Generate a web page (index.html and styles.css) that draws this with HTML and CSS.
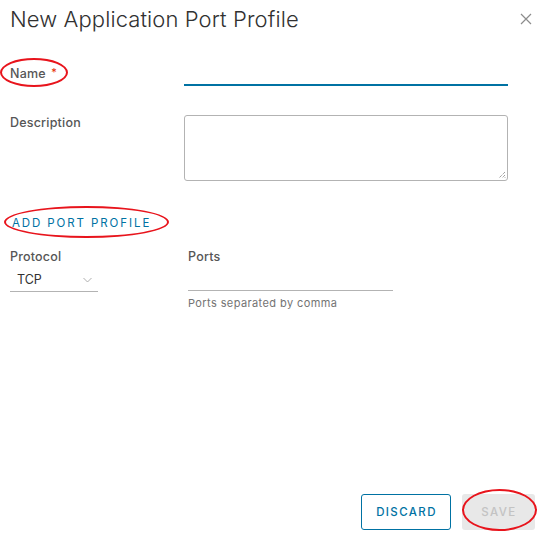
FILE: index.html
```html
<!DOCTYPE html>
<html>
<head>
<meta charset="utf-8">
<link rel="stylesheet" href="styles.css">
</head>
<body>
<div class="modal">
  <div class="header">
    <h1 class="title">New Application Port Profile</h1>
    <button class="close" aria-label="Close">
      <svg width="12" height="12" viewBox="0 0 12 12"><path d="M1 1L11 11M11 1L1 11" stroke="#8c8c8c" stroke-width="1.2" fill="none"/></svg>
    </button>
  </div>
  <div class="form">
    <div class="row row-name">
      <label class="label">Name <span class="req">*</span></label>
      <div class="control"><div class="input focused"></div></div>
    </div>
    <div class="row row-desc">
      <label class="label">Description</label>
      <div class="control"><div class="textarea"><svg class="grip" width="8" height="8" viewBox="0 0 8 8"><path d="M7 1L1 7M7 4L4 7M7 6.5L6.5 7" stroke="#555" stroke-width="0.8" stroke-dasharray="1 1"/></svg></div></div>
    </div>
    <div class="add-link">ADD PORT PROFILE</div>
    <div class="ports-row">
      <div class="col col-proto">
        <div class="label">Protocol</div>
        <div class="select"><span>TCP</span><svg width="9" height="6" viewBox="0 0 9 6"><path d="M0.5 1L4.5 5L8.5 1" stroke="#a6a6a6" stroke-width="0.9" fill="none"/></svg></div>
      </div>
      <div class="col col-ports">
        <div class="label">Ports</div>
        <div class="ports-input"></div>
        <div class="helper">Ports separated by comma</div>
      </div>
    </div>
  </div>
  <div class="footer">
    <button class="btn btn-outline">DISCARD</button>
    <button class="btn btn-disabled">SAVE</button>
  </div>
  <div class="mark mark-name"></div>
  <div class="mark mark-add"></div>
  <div class="mark mark-save"></div>
</div>
</body>
</html>
```
FILE: styles.css
```css
* { box-sizing: border-box; }
html, body { margin: 0; padding: 0; background: #fff; }
body { font-family: Inter, Lato, sans-serif; color: #565656; }
.modal { position: relative; width: 547px; height: 540px; display: flex; flex-direction: column; }
.header { display: flex; justify-content: space-between; align-items: flex-start; padding: 5px 15px 0 10px; }
.title { margin: 0; font-weight: 300; font-size: 22px; line-height: 28px; color: #313131; letter-spacing: 0.1px; }
.close { border: 0; background: none; padding: 0; margin-top: 8px; width: 12px; height: 12px; display: block; }
.close svg { display: block; }
.form { padding: 0 39px 0 10px; }
.row { display: flex; }
.label { font-size: 12.5px; font-weight: 500; color: #565656; line-height: 16px; width: 174px; flex: none; letter-spacing: 0.2px; }
.req { color: #e62700; font-weight: 400; font-size: 11px; vertical-align: 2px; margin-left: 2px; }
.control { flex: 1; }
.row-name { margin-top: 31px; }
.input.focused { margin-top: 20px; height: 2px; background: #0072a3; }
.row-desc { margin-top: 29px; }
.textarea { position: relative; height: 66px; border: 1px solid #b3b3b3; border-radius: 3px; }
.grip { position: absolute; right: 1px; bottom: 1px; }
.add-link { margin-top: 34px; margin-left: 2px; font-size: 11.5px; letter-spacing: 1.9px; color: #0072a3; line-height: 16px; font-weight: 400; }
.ports-row { display: flex; margin-top: 18px; }
.col-proto { width: 178px; flex: none; }
.col-proto .label, .col-ports .label { width: auto; }
.select { width: 88px; height: 23px; border-bottom: 1px solid #b3b3b3; display: flex; justify-content: space-between; align-items: center; padding: 0 6px 2px 7px; font-size: 12.5px; color: #313131; margin-top: 4px; }
.select svg { margin-top: 1px; }
.col-ports { width: 205px; }
.ports-input { margin-top: 25px; height: 1px; background: #b3b3b3; }
.helper { font-size: 11px; color: #737373; margin-top: 5px; line-height: 14px; letter-spacing: 0.4px; }
.footer { margin-top: auto; display: flex; justify-content: flex-end; gap: 11px; padding: 0 12px 10px 0; }
.btn { height: 36px; border-radius: 3px; font-family: Inter, Lato, sans-serif; font-size: 11.5px; font-weight: 500; letter-spacing: 1.4px; padding: 0 0 0 1px; }
.btn-outline { width: 90px; background: #fff; border: 1px solid #0072a3; color: #0072a3; }
.btn-disabled { width: 73px; background: #e8e8e8; border: 0; color: #c3c3c3; }
.mark { position: absolute; border: 2.5px solid #e8141c; border-radius: 50%; pointer-events: none; }
.mark-name { left: 0; top: 58px; width: 68px; height: 29px; }
.mark-add { left: 4px; top: 206px; width: 165px; height: 32px; }
.mark-save { left: 462px; top: 489px; width: 75px; height: 42px; }
```
